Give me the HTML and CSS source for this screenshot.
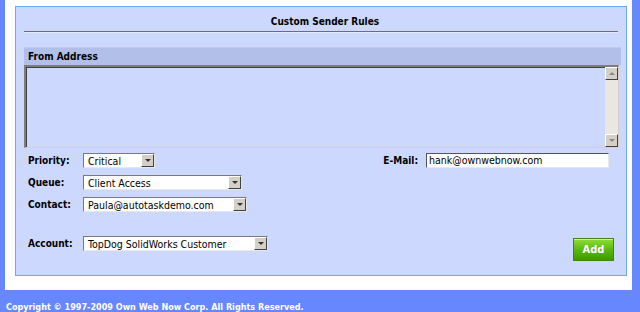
FILE: index.html
```html
<!DOCTYPE html>
<html lang="en">
<head>
  <meta charset="UTF-8">
  <title>Custom Sender Rules</title>
  <link rel="stylesheet" href="styles.css">
</head>
<body>

  <div class="page">
    <div class="panel">
      <div class="title">Custom Sender Rules</div>
      <div class="rule"></div>

      <div class="section-head">From Address</div>
      <div class="textbox">
        <div class="text-area"></div>
        <div class="scrollbar">
          <div class="sb-btn"><span class="tri-up"></span></div>
          <div class="sb-track"></div>
          <div class="sb-btn"><span class="tri-down"></span></div>
        </div>
      </div>

      <div class="form">
        <div class="left-col">
          <div class="field">
            <label>Priority:</label>
            <div class="select w-priority"><span class="val">Critical</span><span class="drop"><span class="tri-down"></span></span></div>
          </div>
          <div class="field">
            <label>Queue:</label>
            <div class="select w-queue"><span class="val">Client Access</span><span class="drop"><span class="tri-down"></span></span></div>
          </div>
          <div class="field">
            <label>Contact:</label>
            <div class="select w-contact"><span class="val">Paula@autotaskdemo.com</span><span class="drop"><span class="tri-down"></span></span></div>
          </div>
          <div class="field account">
            <label>Account:</label>
            <div class="select w-account"><span class="val">TopDog SolidWorks Customer</span><span class="drop"><span class="tri-down"></span></span></div>
          </div>
        </div>

        <div class="right-col">
          <div class="field email">
            <label>E-Mail:</label>
            <div class="input">hank@ownwebnow.com</div>
          </div>
          <button class="add-btn">Add</button>
        </div>
      </div>
    </div>
  </div>

  <footer>Copyright &copy; 1997-2009 Own Web Now Corp. All Rights Reserved.</footer>

</body>
</html>
```

FILE: styles.css
```css
body {
  margin: 0;
  background: #6787fe;
  font-family: "DejaVu Sans Condensed", "DejaVu Sans", sans-serif;
  font-stretch: condensed;
  font-size: 10px;
  color: #000;
}

.page {
  background: #fff;
  margin: 0 8px 0 5px;
  padding: 6px 5px 14px 10px;
}

.panel {
  background: #ccd8fe;
  border: 1px solid #6aa8f8;
  height: 268px;
  padding: 0 0 0 8px;
  display: flex;
  flex-direction: column;
}

.title {
  font-weight: bold;
  text-align: center;
  line-height: 14px;
  margin-top: 8px;
}

.rule {
  height: 1px;
  background: #6e6e6e;
  border-bottom: 1px solid #e4e9ff;
  margin: 2px 8px 0 0;
}

.section-head {
  margin: 14px 5px 0 0;
  height: 17px;
  line-height: 18px;
  background: #b1bfe9;
  border-top: 1px dotted #c8d2f4;
  font-weight: bold;
  padding-left: 4px;
}

.textbox {
  display: flex;
  height: 80px;
  margin-right: 7px;
  border-top: 2px solid #7d7d7d;
  border-left: 2px solid #7d7d7d;
  border-right: 1px solid #d4d0c8;
  border-bottom: 1px solid #d4d0c8;
  box-shadow: inset 1px 1px 0 #404040;
}

.text-area {
  flex: 1;
}

.scrollbar {
  width: 13px;
  display: flex;
  flex-direction: column;
  background: #e9e7e2;
}

.sb-btn {
  height: 13px;
  box-sizing: border-box;
  background: #d4d0c8;
  border: 1px solid;
  border-color: #fff #404040 #404040 #fff;
  display: flex;
  align-items: center;
  justify-content: center;
}

.sb-track {
  flex: 1;
}

.tri-up {
  width: 0;
  height: 0;
  border-left: 3px solid transparent;
  border-right: 3px solid transparent;
  border-bottom: 3px solid #8a8a8a;
}

.tri-down {
  width: 0;
  height: 0;
  border-left: 3px solid transparent;
  border-right: 3px solid transparent;
  border-top: 3px solid #333;
}

.scrollbar .tri-down {
  border-top-color: #8a8a8a;
}

.form {
  display: flex;
  margin-top: 5px;
  flex: 1;
}

.left-col {
  width: 290px;
  display: flex;
  flex-direction: column;
  gap: 7px;
}

.field {
  display: flex;
  align-items: center;
  height: 15px;
}

.field label {
  font-weight: bold;
  width: 55px;
  padding-left: 4px;
}

.field.account {
  margin-top: 17px;
}

.select {
  height: 15px;
  box-sizing: border-box;
  background: #fff;
  border: 1px solid;
  border-color: #7a7a7a #e8e8e8 #e8e8e8 #7a7a7a;
  display: flex;
  align-items: center;
}

.select .val {
  flex: 1;
  padding-left: 4px;
  font-size: 10.5px;
  white-space: nowrap;
  overflow: hidden;
}

.drop {
  width: 13px;
  height: 13px;
  box-sizing: border-box;
  background: #d4d0c8;
  border: 1px solid;
  border-color: #fff #404040 #404040 #fff;
  display: flex;
  align-items: center;
  justify-content: center;
}

.w-priority { width: 72px; }
.w-queue { width: 159px; }
.w-contact { width: 164px; }
.w-account { width: 185px; }

.right-col {
  flex: 1;
  display: flex;
  flex-direction: column;
  align-items: flex-end;
  padding-right: 17px;
}

.field.email label {
  width: auto;
  margin-right: 8px;
}

.input {
  width: 183px;
  height: 15px;
  box-sizing: border-box;
  background: #fff;
  border: 1px solid;
  border-color: #555 #e8e8e8 #e8e8e8 #555;
  padding-left: 2px;
  font-size: 10.5px;
  line-height: 13px;
}

.add-btn {
  margin-top: 70px;
  margin-right: -5px;
  width: 41px;
  height: 23px;
  font-family: inherit;
  font-stretch: condensed;
  font-size: 11px;
  font-weight: bold;
  color: #fff;
  background: linear-gradient(#8ede3a, #5cb90e 50%, #3f9a00);
  border: 1px solid #3b8712;
  box-shadow: inset 0 1px 0 #c8f59a;
  padding: 0;
}

footer {
  color: #fff;
  font-weight: bold;
  font-size: 9px;
  padding: 12px 0 0 6px;
}
```
